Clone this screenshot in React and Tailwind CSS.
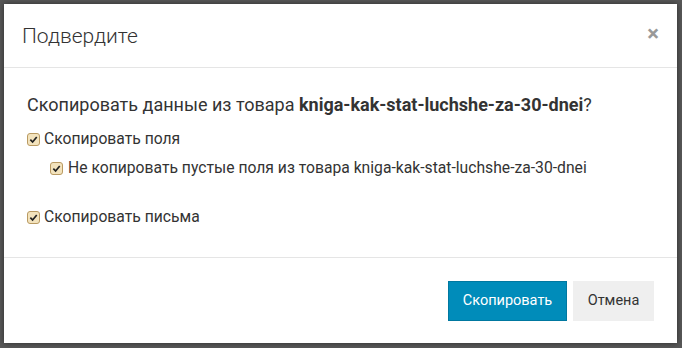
import React from "react";

function Check() {
  return (
    <span className="inline-flex items-center justify-center w-[13px] h-[13px] shrink-0 rounded-[3px] border border-[#b99a62] bg-[#f3e3bd]">
      <svg width="9" height="9" viewBox="0 0 10 10">
        <path d="M1.5 5.2 L4 7.8 L8.6 2.2" fill="none" stroke="#222" strokeWidth="1.9" />
      </svg>
    </span>
  );
}

export default function App() {
  return (
    <div className="w-[682px] h-[348px] bg-[#585858] p-[4px] pr-[5px] pb-[5px] font-['Roboto',sans-serif] overflow-hidden">
      <div className="h-full bg-white flex flex-col shadow-[0_0_6px_rgba(0,0,0,0.5)]">
        <div className="h-[64px] border-b border-[#e5e5e5] flex items-center justify-between pl-[18px] pr-[18px]">
          <span className="text-[21px] font-light text-[#333] mt-[2px]">Подвердите</span>
          <span className="text-[#999] text-[22px] font-bold leading-none mb-[3px]">×</span>
        </div>
        <div className="h-[190px] border-b border-[#e5e5e5] pl-[23px] pt-[24px] text-[#333]">
          <div className="text-[18px] leading-[26px]">
            Скопировать данные из товара <b className="font-bold">kniga-kak-stat-luchshe-za-30-dnei</b>?
          </div>
          <label className="flex items-center gap-[4px] mt-[11px] text-[15.7px] leading-[20px]">
            <Check />
            <span>Скопировать поля</span>
          </label>
          <label className="flex items-center gap-[5px] mt-[9px] ml-[23px] text-[15.7px] leading-[20px]">
            <Check />
            <span>Не копировать пустые поля из товара kniga-kak-stat-luchshe-za-30-dnei</span>
          </label>
          <label className="flex items-center gap-[4px] mt-[29px] text-[15.7px] leading-[20px]">
            <Check />
            <span>Скопировать письма</span>
          </label>
        </div>
        <div className="flex-1 flex items-center justify-end gap-[6px] pr-[23px]">
          <button className="h-[40px] w-[119px] bg-[#008cba] border border-[#0078a0] text-white text-[14.5px]">Скопировать</button>
          <button className="h-[40px] w-[81px] bg-[#efefef] text-[#333] text-[14.5px]">Отмена</button>
        </div>
      </div>
    </div>
  );
}
